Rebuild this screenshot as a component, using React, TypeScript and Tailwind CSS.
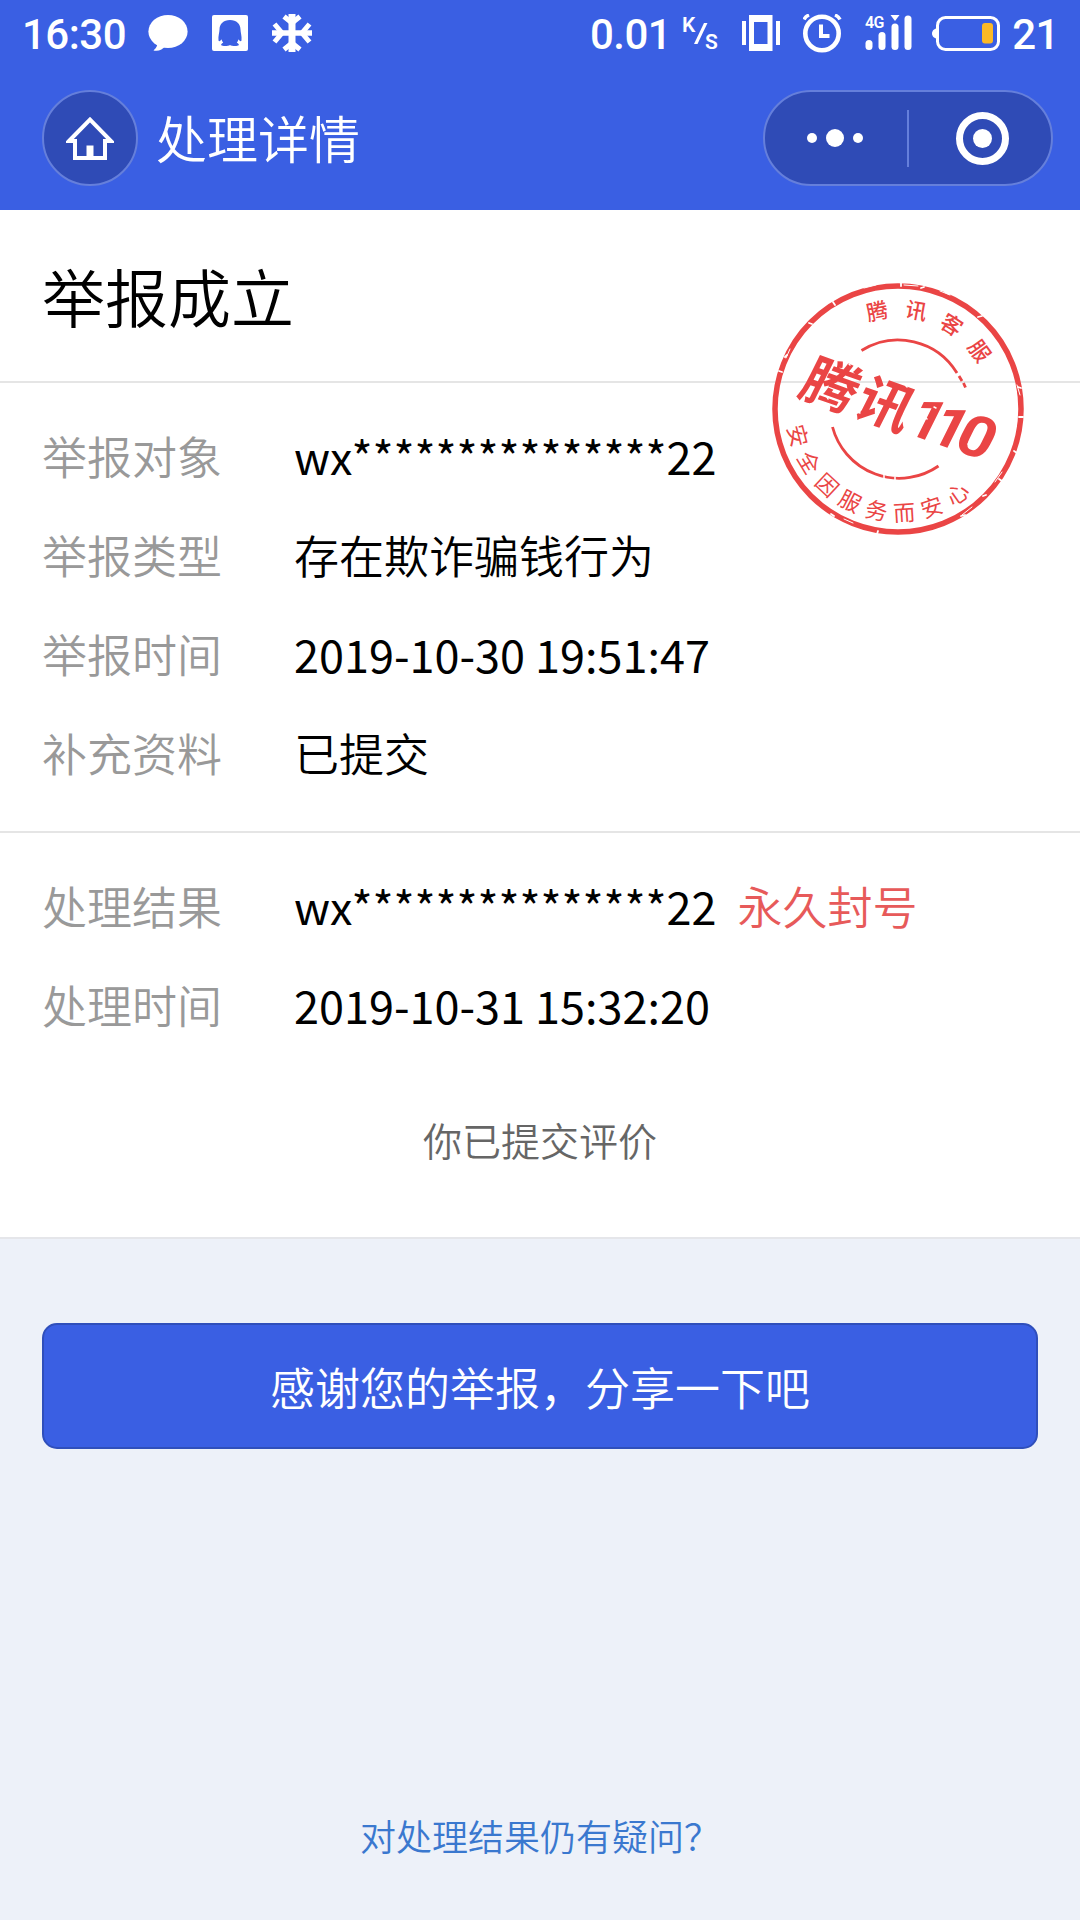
type RowProps = {
  label: string;
  value: string;
  note?: string;
};

const reportRows: RowProps[] = [
  { label: "举报对象", value: "wx***************22" },
  { label: "举报类型", value: "存在欺诈骗钱行为" },
  { label: "举报时间", value: "2019-10-30 19:51:47" },
  { label: "补充资料", value: "已提交" },
];

const resultRows: RowProps[] = [
  { label: "处理结果", value: "wx***************22", note: "永久封号" },
  { label: "处理时间", value: "2019-10-31 15:32:20" },
];

// angle in degrees, clockwise from twelve o'clock
const sealTop = [
  { c: "腾", a: -12 },
  { c: "讯", a: 10.5 },
  { c: "客", a: 32.5 },
  { c: "服", a: 54.5 },
];

// angle in degrees, counted from six o'clock
const sealBottom = [
  { c: "安", a: 75 },
  { c: "全", a: 59 },
  { c: "因", a: 43 },
  { c: "服", a: 27.5 },
  { c: "务", a: 12 },
  { c: "而", a: -3.5 },
  { c: "安", a: -19 },
  { c: "心", a: -35 },
];

function ChatIcon() {
  return (
    <svg width="40" height="38" viewBox="0 0 40 38" fill="#fff">
      <ellipse cx="20" cy="17.5" rx="19.6" ry="16.6" />
      <path d="M9 28c1 4-1 6-3.500 8.500C10 37.500 15 36 17 32z" />
    </svg>
  );
}

function PenguinIcon() {
  return (
    <svg width="36" height="36" viewBox="0 0 36 36">
      <rect width="36" height="36" rx="2" fill="#fff" />
      <path
        d="M18 5c-6.500 0-10.500 4-10.500 9.500C7.500 17.500 6 21 6.500 25.500c.8 1.600 2.200 0 3-1.200.3 1.300.8 2.500 1.700 3.500-1.500.7-2.500 1.600-1.900 2.500 1.200 1.200 7.200 1 8.700-.3 1.500 1.300 7.500 1.500 8.700.3.600-.9-.4-1.800-1.900-2.500.9-1 1.400-2.200 1.700-3.500.8 1.200 2.200 2.800 3 1.200.5-4.500-1-8-1-11C28.500 9 24.500 5 18 5z"
        fill="#3a5fe3"
      />
    </svg>
  );
}

function SnowIcon() {
  return (
    <svg width="40" height="38" viewBox="0 0 40 38" fill="none" stroke="#fff">
      <path d="M20 0v38" strokeWidth="7" />
      <path d="M0 19h40" strokeWidth="5.500" />
      <path d="M12 2.500 20 9l8-6.500M12 35.500l8-6.500 8 6.500M2.500 10 10 19l-7.500 9M37.500 10 30 19l7.500 9" strokeWidth="5" />
    </svg>
  );
}

function VibrateIcon() {
  return (
    <svg width="38" height="36" viewBox="0 0 38 36">
      <path d="M0 6h4v24H0zM34 6h4v24h-4z" fill="#fff" />
      <path d="M7 0h23.500v36H7zM12 7v22h13.500V7z" fill="#fff" fillRule="evenodd" />
    </svg>
  );
}

function AlarmIcon() {
  return (
    <svg width="40" height="39" viewBox="0 0 40 39" fill="none" stroke="#fff">
      <circle cx="19" cy="19.500" r="16.700" strokeWidth="4.600" />
      <path d="M18 10.500v11.500h8.500" strokeWidth="4" />
      <path d="M1 5.500C2 3.500 3.500 2 6 1M37 5.500c-1-2-2.500-3.500-5-4.500" strokeWidth="3.500" />
    </svg>
  );
}

function SignalIcon() {
  return (
    <svg width="48" height="38" viewBox="0 0 48 38" fill="#fff">
      <text x="0" y="13.700" fontFamily="Roboto, sans-serif" fontSize="16" fontWeight="600" textLength="19" lengthAdjust="spacingAndGlyphs">4G</text>
      <rect x="0.500" y="26" width="7" height="10" rx="3.500" />
      <rect x="13.500" y="18" width="7" height="18" rx="3.500" />
      <rect x="26.500" y="9.500" width="7" height="26.500" rx="3.500" />
      <rect x="39.500" y="1.500" width="7" height="34.500" rx="3.500" />
      <path d="M25.500 1h9L30 7z" />
    </svg>
  );
}

function BatteryIcon() {
  return (
    <svg width="69" height="35" viewBox="0 0 69 35">
      <path d="M5 12.500C2 12.500 0 15 0 17.500s2 5 5 5z" fill="#fff" />
      <rect x="5.500" y="1.500" width="61" height="32" rx="8" fill="none" stroke="#fff" strokeWidth="3" />
      <rect x="50" y="7" width="11" height="20.500" rx="3" fill="#fcb927" />
    </svg>
  );
}

function HomeIcon() {
  return (
    <svg width="48" height="44" viewBox="0 0 48 44">
      <path d="M3 25 24 3.500 45 25h-6v17H9V25z" fill="none" stroke="#fff" strokeWidth="4" />
      <path d="M20.500 29.500h7V42h-7z" fill="#fff" />
    </svg>
  );
}

function StatusBar() {
  return (
    <div className="flex h-[66px] items-center pl-[22px] pr-[21px] font-[Roboto,sans-serif] text-[42px] font-medium leading-none tracking-[-0.5px] text-white">
      <span className="w-[126px] pt-[3px]">16:30</span>
      <div className="flex items-center gap-6">
        <ChatIcon />
        <PenguinIcon />
        <SnowIcon />
      </div>
      <span className="ml-auto mr-[10px] pt-[3px]">0.01</span>
      <svg className="mr-[21px]" width="40" height="44" viewBox="0 0 40 44" fill="#fff" fontSize="21" fontWeight="600" letterSpacing="0">
        <text x="1" y="21">K</text>
        <text x="24" y="37.500">S</text>
        <path d="M23 12h3.500L16.500 33H13z" />
      </svg>
      <VibrateIcon />
      <div className="ml-[23px] mr-[22px]">
        <AlarmIcon />
      </div>
      <SignalIcon />
      <div className="ml-[19px] mr-[11px]">
        <BatteryIcon />
      </div>
      <span className="pt-[3px]">21</span>
    </div>
  );
}

function NavBar() {
  return (
    <div className="flex h-36 items-center pl-[42px] pr-[27px]">
      <div className="flex size-24 items-center justify-center rounded-full border-2 border-[#657fdb] bg-[#2f4bb6]">
        <HomeIcon />
      </div>
      <h1 className="ml-[18px] pb-0.5 text-[51px] font-[350] leading-none text-white">处理详情</h1>
      <div className="ml-auto flex h-24 w-[290px] items-center rounded-full border-2 border-[#657fdb] bg-[#2f4bb6]">
        <div className="flex w-[142px] items-center justify-center gap-[9px] pr-0.5">
          <i className="size-2.5 rounded-full bg-white" />
          <i className="size-[18px] rounded-full bg-white" />
          <i className="size-2.5 rounded-full bg-white" />
        </div>
        <div className="h-[57px] w-0.5 bg-[#657fdb]" />
        <div className="flex flex-1 justify-center pl-[5px]">
          <div className="flex size-[53px] items-center justify-center rounded-full border-[7px] border-white">
            <i className="size-[19px] rounded-full bg-white" />
          </div>
        </div>
      </div>
    </div>
  );
}

function Row({ label, value, note }: RowProps) {
  const latin = /^[\x20-\x7e]+$/.test(value);
  return (
    <div className="flex h-[99px] items-center text-[45px] leading-none">
      <span className="w-[252px] text-[#999]">{label}</span>
      <span className={latin ? "font-normal text-black" : "text-black"}>{value}</span>
      {note && <span className="ml-[21px] text-[#e75a5a]">{note}</span>}
    </div>
  );
}

function Seal() {
  return (
    <svg className="absolute left-[768px] top-[69px]" width="260" height="260" viewBox="-130 -130 260 260" fill="#ea4545" textAnchor="middle">
      <circle r="123" fill="none" stroke="#ea4545" strokeWidth="5.500" />
      <path d="M-36.500-58.500A69 69 0 0 1 59-36M-65.500 18A69 69 0 0 0 40.500 57" fill="none" stroke="#ea4545" strokeWidth="2.800" />
      <path d="M61-33l3 5M65.500-26l2 4.500" fill="none" stroke="#ea4545" strokeWidth="2.800" />

      {sealTop.map((t) => (
        <text key={t.a} y="-92" fontSize="21.500" fontWeight="500" transform={`rotate(${t.a})`}>{t.c}</text>
      ))}
      {sealBottom.map((t) => (
        <text key={t.a} y="112" fontSize="22" fontWeight="400" transform={`rotate(${t.a})`}>{t.c}</text>
      ))}

      <g transform="rotate(19.500) skewX(-7)" fontWeight="700">
        <text x="-71" y="20" fontSize="55">腾</text>
        <text x="-13" y="20" fontSize="55">讯</text>
        <g fontFamily="Roboto, sans-serif" fontSize="58">
          <text x="32" y="20">1</text>
          <text x="56" y="20">1</text>
          <text x="84" y="20" textLength="36" lengthAdjust="spacingAndGlyphs">0</text>
        </g>
      </g>

      {/* worn ink */}
      <g fill="none" stroke="#fff" strokeLinecap="round">
        <path d="M-65-107l2 3M-89-86l3 1M3-126v3M26-122l-3 1M47-117l4 2M84-93l-4 1M120-22l3 1M121 8h4M116 42l3 2M101 70l3 2M88 86l-3 1M63 107l4-1M-20 122l-1 3M-67 105l3 2M-119-38l3 1M-113-52l2-2" strokeWidth="1.800" />
        <path d="M-22-124l-12 3M6-124l14 1M42-118l10 4M-108-60l-4 9M119-24l3 10M104 63l-7 10M74 98l-10 8M-54 110l9 4" strokeWidth="1" />
        <path d="M-14 66v5M-3 68v4M-49-45l1 1M-40 3l2 1M8-23l1 1M36-2l2 1M-71-12l1 2M70 35l1 1M28 9l1 1" strokeWidth="1.500" />
      </g>
    </svg>
  );
}

export default function App() {
  return (
    <div className="flex h-[1920px] w-[1080px] flex-col overflow-hidden bg-[#edf1f9] font-['Noto_Sans_CJK_SC',sans-serif] font-[350]">
      <header className="h-[210px] bg-[#3a5fe3]">
        <StatusBar />
        <NavBar />
      </header>

      <main className="relative h-[1029px] border-b-2 border-[#e5e6ea] bg-white">
        <h2 className="flex h-[173px] items-center border-b-2 border-[#e5e5e5] pb-0.5 pl-[42px] text-[63px] font-[350] leading-none text-black">
          举报成立
        </h2>
        <section className="h-[450px] border-b-2 border-[#e5e5e5] pl-[42px] pt-[23px]">
          {reportRows.map((r) => (
            <Row key={r.label} {...r} />
          ))}
        </section>
        <section className="pl-[42px] pt-[23px]">
          {resultRows.map((r) => (
            <Row key={r.label} {...r} />
          ))}
        </section>
        <p className="mt-[66px] text-center text-[39px] leading-none text-[#666]">你已提交评价</p>
        <Seal />
      </main>

      <footer className="flex flex-1 flex-col items-center px-[42px] pb-[67px] pt-[84px]">
        <button className="h-[126px] w-full rounded-[15px] border-2 border-[#2f4fbb] bg-[#3a5fe3] text-[45px] leading-none text-white">
          感谢您的举报，分享一下吧
        </button>
        <a className="mt-auto text-[36px] leading-none text-[#3a78cf]">对处理结果仍有疑问？</a>
      </footer>
    </div>
  );
}
